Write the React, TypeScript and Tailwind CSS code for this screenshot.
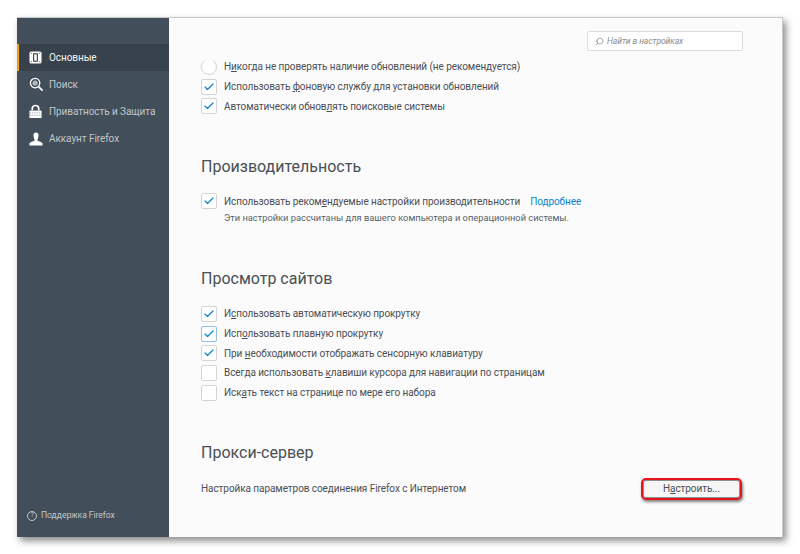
import type { ReactNode } from "react";
import { Check, Search } from "lucide-react";

function Box({ checked, focused, round }: { checked?: boolean; focused?: boolean; round?: boolean }) {
  return (
    <span
      className={`flex h-[16px] w-[16px] shrink-0 items-center justify-center border bg-white ${
        round ? "rounded-full" : "rounded-[2px]"
      } ${focused ? "border-[#8fc0e8]" : "border-[#d4d4d4]"}`}
    >
      {checked && <Check size={12} strokeWidth={2.5} className="text-[#0a84d0]" />}
    </span>
  );
}

function Row({ checked, focused, round, children }: { checked?: boolean; focused?: boolean; round?: boolean; children: ReactNode }) {
  return (
    <div className="flex h-[19.7px] items-center gap-[7px] text-[#4a4f55]">
      <Box checked={checked} focused={focused} round={round} />
      <span>{children}</span>
    </div>
  );
}

function NavIcon({ name }: { name: string }) {
  if (name === "general")
    return (
      <svg width="13" height="13" viewBox="0 0 14 14">
        <rect x="0.5" y="0.5" width="13" height="13" rx="2" fill="#fff" />
        <rect x="5" y="3" width="4" height="8" fill="none" stroke="#39434d" strokeWidth="1.2" />
        <rect x="2" y="2" width="1" height="1" fill="#39434d" />
        <rect x="11" y="2" width="1" height="1" fill="#39434d" />
        <rect x="2" y="11" width="1" height="1" fill="#39434d" />
        <rect x="11" y="11" width="1" height="1" fill="#39434d" />
      </svg>
    );
  if (name === "search")
    return (
      <svg width="15" height="15" viewBox="0 0 16 16">
        <circle cx="6.5" cy="6.5" r="5" fill="none" stroke="#fff" strokeWidth="1.4" />
        <circle cx="6.5" cy="6.5" r="2.8" fill="#aeb4ba" />
        <path d="M10.2 10.2 L14.5 14.5" stroke="#fff" strokeWidth="1.8" />
      </svg>
    );
  if (name === "lock")
    return (
      <svg width="13" height="15" viewBox="0 0 14 16">
        <path d="M3.5 7 V5 a3.5 3.5 0 0 1 7 0 V7" fill="none" stroke="#fff" strokeWidth="1.8" />
        <rect x="0.5" y="7" width="13" height="8" fill="#fff" />
        <path d="M1 9.5 H13 M1 12 H13" stroke="#8a929a" strokeWidth="1" strokeDasharray="1 1" />
      </svg>
    );
  return (
    <svg width="14" height="14" viewBox="0 0 15 15">
      <path
        d="M7.5 0.5 C5.5 0.5 4.6 2 4.8 4 C5 6 5.5 7.4 6 8 V9 C4.5 10.2 1 10.6 0.5 12 V14.5 H14.5 V12 C14 10.6 10.5 10.2 9 9 V8 C9.5 7.4 10 6 10.2 4 C10.4 2 9.5 0.5 7.5 0.5 Z"
        fill="#fff"
      />
    </svg>
  );
}

const nav = [
  { id: "general", label: "Основные" },
  { id: "search", label: "Поиск" },
  { id: "lock", label: "Приватность и Защита" },
  { id: "user", label: "Аккаунт Firefox" },
];

export default function App() {
  return (
    <div className="h-[554px] w-[800px] overflow-hidden bg-white p-[17px] font-['Roboto','Noto_Sans',sans-serif] text-[10px] tracking-[-0.07px]">
      <div className="flex h-[520px] w-[766px] border-t border-r border-[#c8c8c8] bg-[#fbfbfb] shadow-[3px_4px_7px_rgba(0,0,0,0.45)]">
        <aside className="flex w-[152px] shrink-0 flex-col bg-[#424f5a] pt-[26px]">
          {nav.map((item, i) => (
            <div
              key={item.id}
              className={`flex h-[27px] items-center border-l-[2px] pl-[10px] ${
                i === 0 ? "border-[#f0a30a] bg-[#37424c] text-[#f2f3f4]" : "border-transparent text-[#c1c5c9]"
              }`}
            >
              <span className="flex w-[20px] justify-start">
                <NavIcon name={item.id} />
              </span>
              <span>{item.label}</span>
            </div>
          ))}
          <div className="mt-auto mb-[15px] flex items-center gap-[4px] pl-[10px] text-[8.6px] text-[#c1c5c9]">
            <span className="flex h-[10px] w-[10px] items-center justify-center rounded-full border border-[#c1c5c9] text-[7px] leading-none">?</span>
            Поддержка Firefox
          </div>
        </aside>

        <main className="flex-1 overflow-hidden">
          <div className="relative z-10 flex h-[43px] justify-end bg-[#fbfbfb] pr-[39px] pt-[13px]">
            <div className="flex h-[20px] w-[156px] items-center gap-[3px] rounded-[2px] border border-[#dcdcdc] bg-white pl-[7px] text-[8.5px] italic text-[#8c8c8c]">
              <Search size={9} className="-scale-x-100 text-[#8c8c8c]" />
              Найти в настройках
            </div>
          </div>

          <div className="-mt-[4px] pl-[32px] pr-[40px]">
            <Row round>
              Н<u>и</u>когда не проверять наличие обновлений (не рекомендуется)
            </Row>
            <Row checked>
              Использовать <u>ф</u>оновую службу для установки обновлений
            </Row>
            <Row checked>
              Автоматически обнов<u>л</u>ять поисковые системы
            </Row>

            <h2 className="mt-[38px] text-[16px] leading-[26px] tracking-normal text-[#4a4f55]">Производительность</h2>
            <div className="mt-[11px] flex h-[20px] items-center gap-[7px] text-[#4a4f55]">
              <Box checked />
              <span>
                Использовать реком<u>е</u>ндуемые настройки производительности
              </span>
              <span className="ml-[3px] text-[#0a84d0]">Подробнее</span>
            </div>
            <p className="pl-[23px] text-[9.3px] leading-[14px] tracking-normal text-[#5a5f65]">
              Эти настройки рассчитаны для вашего компьютера и операционной системы.
            </p>

            <h2 className="mt-[41px] text-[16px] leading-[26px] tracking-normal text-[#4a4f55]">Просмотр сайтов</h2>
            <div className="mt-[12px]">
              <Row checked>
                И<u>с</u>пользовать автоматическую прокрутку
              </Row>
              <Row checked focused>
                Исп<u>о</u>льзовать плавную прокрутку
              </Row>
              <Row checked>
                При <u>н</u>еобходимости отображать сенсорную клавиатуру
              </Row>
              <Row>
                Всегда использовать <u>к</u>лавиши курсора для навигации по страницам
              </Row>
              <Row>
                Иск<u>а</u>ть текст на странице по мере его набора
              </Row>
            </div>

            <h2 className="mt-[37px] text-[16px] leading-[26px] tracking-normal text-[#4a4f55]">Прокси-сервер</h2>
            <div className="mt-[12px] flex items-center justify-between text-[#4a4f55]">
              <span>Настройка параметров соединения Firefox с Интернетом</span>
              <button className="flex h-[22px] w-[101px] items-center justify-center rounded-[5px] border-2 border-[#e8141c] bg-[#f6f6f6] text-[#4a4f55] shadow-[1px_2px_3px_rgba(0,0,0,0.5),inset_0_0_0_1px_#8a8f94]">
                Н<u>а</u>строить...
              </button>
            </div>
          </div>
        </main>
      </div>
    </div>
  );
}
